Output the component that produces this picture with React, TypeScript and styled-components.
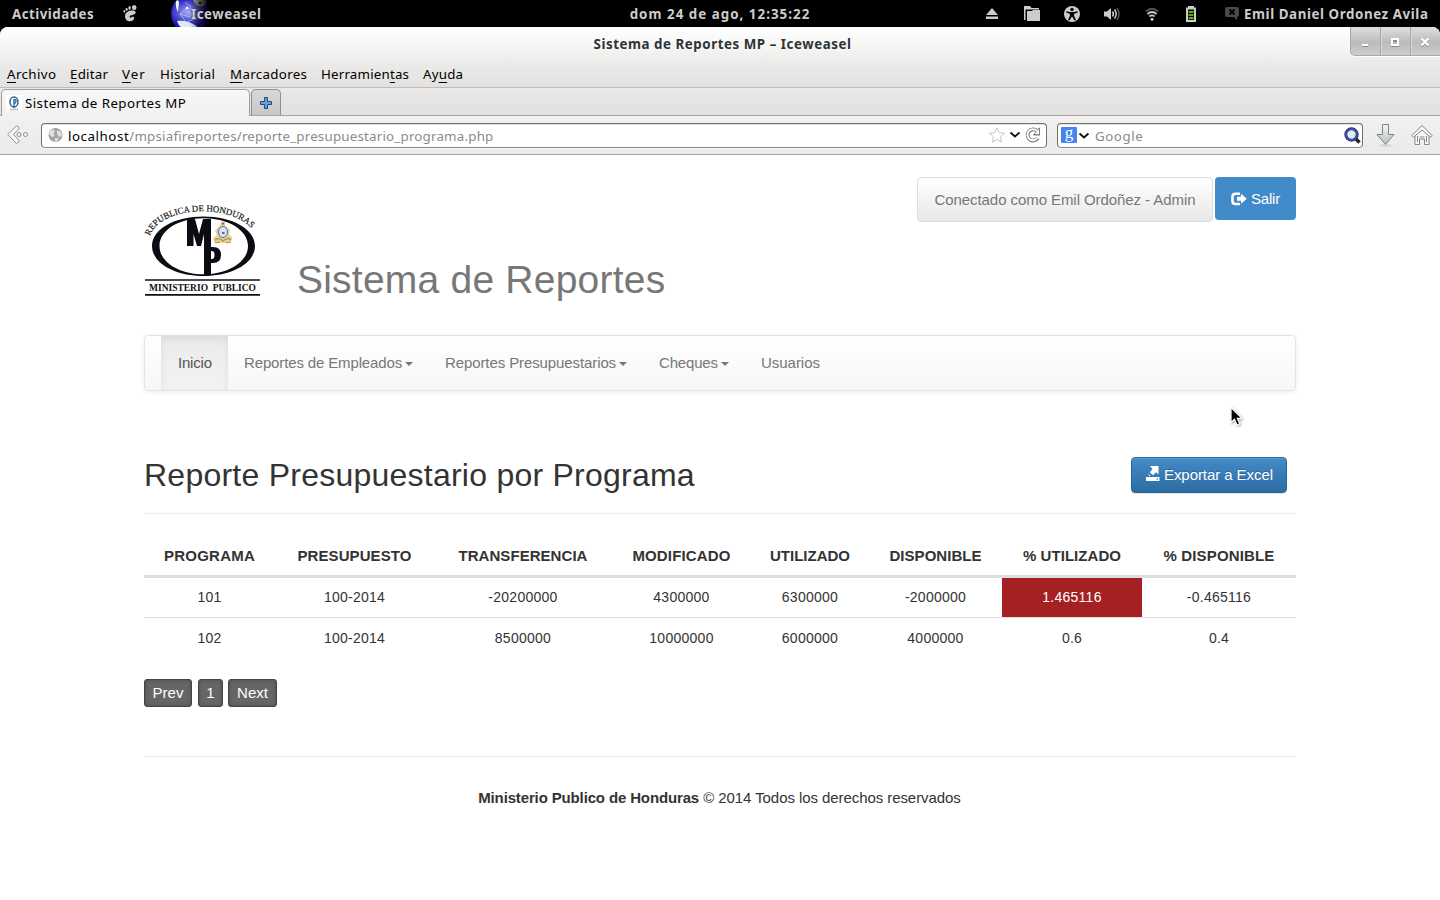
import React from 'react';
import styled, { createGlobalStyle, css } from 'styled-components';

const Global = createGlobalStyle`
  * { box-sizing: border-box; }
  body { margin: 0; background: #fff; overflow: hidden; }
  svg { display: block; flex: none; }
`;

const ui = `"Noto Sans", sans-serif`;
const helv = `"Liberation Sans", Arial, sans-serif`;

const Screen = styled.div`
  width: 1440px;
  height: 900px;
  overflow: hidden;
  background: #000;
  font-family: ${helv};
`;

/* ---------- desktop panel ---------- */
const Panel = styled.header`
  display: grid;
  grid-template-columns: 480px 480px 480px;
  height: 27px;
  background: #000;
  color: #ccc;
  font: 700 13.33px/28px ${ui};
  white-space: nowrap;
  overflow: hidden;
`;
const PanelLeft = styled.div`
  display: flex;
  padding-left: 12px;
`;
const Activities = styled.span`
  width: 111px;
  letter-spacing: 0.47px;
`;
const Foot = styled.span`
  width: 48px;
  padding-top: 5px;
`;
const AppMenu = styled.div`
  display: grid;
  grid-template-columns: 20px auto;
  height: 27px;
  overflow: hidden;
  & > svg { grid-area: 1 / 1; }
`;
const AppName = styled.span`
  z-index: 1;
  grid-area: 1 / 2;
  letter-spacing: 0.53px;
  text-shadow: 0 0 2px rgba(0, 0, 0, 0.7);
`;
const Clock = styled.div`
  text-align: center;
  letter-spacing: 1.03px;
`;
const Tray = styled.div`
  display: flex;
  align-items: center;
  height: 27px;
  padding-left: 12px;
`;
const TrayCell = styled.span<{ $w?: number }>`
  display: flex;
  flex: none;
  justify-content: center;
  width: ${(p) => p.$w ?? 40}px;
`;
const UserName = styled.span`
  padding-top: 1px;
  margin-left: -9px;
  letter-spacing: 0.58px;
`;

/* ---------- browser window ---------- */
const BrowserWindow = styled.div`
  height: 873px;
  background: #fff;
  border-radius: 8px 8px 0 0;
  overflow: hidden;
`;
const Chrome = styled.div`
  height: 61px;
  background: linear-gradient(#fff 0, #f6f6f5 19px, #ecebea 36px, #e2e1df 60px);
  border-bottom: 1px solid #bdbcba;
`;
const TitleBar = styled.div`
  display: grid;
  grid-template-columns: 90px 1fr 90px;
  height: 33px;
  padding-left: 5px;
`;
const WindowTitle = styled.div`
  grid-column: 2;
  text-align: center;
  color: #2e3436;
  font: 700 13.33px/35px ${ui};
  letter-spacing: 0.54px;
`;
const WindowButtons = styled.div`
  display: flex;
  height: 29px;
  border: 1px solid #aaa9a7;
  border-width: 0 0 1px 1px;
  border-radius: 0 0 0 5px;
  box-shadow: 0 1px #fff;
  background: linear-gradient(#dededd, #bcbbb9 55%, #cfcecd);
`;
const WindowButton = styled.span`
  display: flex;
  flex: none;
  align-items: center;
  justify-content: center;
  width: 30px;
  padding: 1px 1px 0 0;
  &:first-child { width: 29px; }
  & + & { border-left: 1px solid #a5a4a2; box-shadow: inset 1px 0 #dcdbda; }
`;
const MenuBar = styled.nav`
  display: flex;
  padding-left: 7px;
  color: #000;
  font: 13.33px/28px ${ui};
`;
const MenuItem = styled.span<{ $w: number; $ls: number }>`
  width: ${(p) => p.$w}px;
  letter-spacing: ${(p) => p.$ls}px;
  white-space: nowrap;
  u { text-underline-offset: 3px; text-decoration-thickness: 1px; }
`;
const TabStrip = styled.div`
  display: flex;
  height: 28px;
  padding: 1px 0 0 1px;
  background: linear-gradient(#eae9e8, #e1e0de);
  box-shadow: inset 0 -1px #a6a5a3;
`;
const Tab = styled.div`
  display: flex;
  width: 249px;
  padding: 0 0 0 4px;
  border: 1px solid #a09f9d;
  border-bottom: 0;
  border-radius: 5px 5px 0 0;
  background: linear-gradient(#f7f7f7, #f2f1f0);
  color: #000;
  font: 13.33px/27px ${ui};
  letter-spacing: 0.42px;
`;
const Favicon = styled.span`
  width: 16px;
  height: 16px;
  margin: 5px 3px 0 0;
  background: #fff;
`;
const NewTab = styled.div`
  display: flex;
  align-items: center;
  justify-content: center;
  width: 30px;
  margin-left: 1px;
  border: 1px solid #8f8e8c;
  border-radius: 5px 5px 0 0;
  border-bottom-color: #a6a5a3;
  background: linear-gradient(#d9d8d7, #c8c7c5);
`;
const Toolbar = styled.div`
  display: flex;
  height: 39px;
  padding: 7px 7px 0;
  background: linear-gradient(#f2f1f0, #ebeae8);
  border-bottom: 1px solid #a6a5a3;
`;
const BackIcon = styled.span`
  width: 34px;
  padding-top: 2px;
`;
const Field = styled.div<{ $w: number }>`
  display: flex;
  align-items: center;
  width: ${(p) => p.$w}px;
  height: 25px;
  margin-right: 10px;
  border: 1px solid #70706e;
  border-bottom-color: #8b8a88;
  border-radius: 4px;
  background: #fff;
  box-shadow: inset 0 1px #e3e3e2, 0 1px #f8f8f8;
  font: 13.33px/24px ${ui};
  color: #8b8b8b;
`;
const Address = styled.span`
  flex: 1;
  padding-top: 1px;
  margin-left: 5px;
  white-space: nowrap;
  letter-spacing: 0.205px;
  b { font-weight: 400; color: #000; letter-spacing: 0.55px; }
`;
const AddressTools = styled.span`
  display: flex;
  align-items: center;
  gap: 4px;
  margin: -1px 5px 0 0;
`;
const Engine = styled.span`
  display: flex;
  justify-content: center;
  width: 16px;
  height: 16px;
  margin: -1px 1px 0 3px;
  border-radius: 1px;
  background: #4484f3;
  color: #fff;
  font: 17px/12px "Liberation Serif", serif;
`;
const Placeholder = styled.span`
  flex: 1;
  padding-top: 1px;
  margin-left: 5px;
  letter-spacing: 0.55px;
`;
const ToolIcon = styled.span<{ $ml: number }>`
  margin-left: ${(p) => p.$ml}px;
`;

/* ---------- page ---------- */
const Page = styled.main`
  width: 1152px;
  margin: 0 auto;
  padding-top: 22px;
  color: #333;
  font-size: 15px;
`;
const Header = styled.div`
  display: flex;
  height: 158px;
`;
const LogoBox = styled.div`
  width: 153px;
  padding-top: 25px;
`;
const SiteTitle = styled.h1`
  flex: 1;
  margin: 80px 0 0;
  color: #777;
  font-weight: 400;
  font-size: 39px;
  line-height: 45px;
  letter-spacing: 0.22px;
`;
const Account = styled.div`
  display: flex;
  align-items: flex-start;
  gap: 2px;
`;
const UserBadge = styled.div`
  width: 296px;
  height: 45px;
  border: 1px solid #ddd;
  border-radius: 4px;
  background: linear-gradient(#fff, #e8e8e8);
  color: #777;
  line-height: 44px;
  text-align: center;
  letter-spacing: -0.07px;
`;
const Logout = styled.a`
  display: flex;
  align-items: center;
  gap: 4px;
  width: 81px;
  height: 43px;
  padding-left: 16px;
  border-radius: 4px;
  background: #428bca;
  color: #fff;
  letter-spacing: -0.2px;
`;
const NavBar = styled.nav`
  display: flex;
  height: 56px;
  padding-left: 16px;
  border: 1px solid #e4e4e4;
  border-radius: 4px;
  background: linear-gradient(#fff, #f6f6f6);
  box-shadow: 0 1px 5px rgba(0, 0, 0, 0.075), inset 0 1px 0 #fff;
`;
const NavItem = styled.a<{ $w: number; $ls: number; $active?: boolean }>`
  display: flex;
  align-items: center;
  width: ${(p) => p.$w}px;
  padding: 0 0 2px 16px;
  color: #777;
  white-space: nowrap;
  letter-spacing: ${(p) => p.$ls}px;
  ${(p) =>
    p.$active &&
    css`
      padding-left: 17px;
      color: #555;
      background: linear-gradient(#ebebeb, #f3f3f3);
      box-shadow: inset 0 3px 9px rgba(0, 0, 0, 0.075);
    `}
`;
const Caret = styled.i`
  margin: 3px 0 0 3px;
  border: 4px solid transparent;
  border-top-color: #777;
  border-bottom: 0;
`;
const ReportHead = styled.div`
  display: flex;
  justify-content: space-between;
  height: 57px;
  margin-top: 66px;
  padding-right: 9px;
  border-bottom: 1px solid #eee;
`;
const ReportTitle = styled.h2`
  margin: 0;
  font-weight: 400;
  font-size: 32px;
  line-height: 36px;
  letter-spacing: 0.24px;
`;
const ExportButton = styled.a`
  display: flex;
  align-items: center;
  gap: 4px;
  width: 156px;
  height: 36px;
  padding: 0 0 2px 14px;
  border: 1px solid #2b669a;
  border-radius: 4px;
  background: linear-gradient(#428bca, #2d6ca2);
  box-shadow: inset 0 1px 0 rgba(255, 255, 255, 0.15), 0 1px 1px rgba(0, 0, 0, 0.1);
  color: #fff;
  text-shadow: 0 -1px 0 rgba(0, 0, 0, 0.2);
  letter-spacing: -0.07px;
`;
const Table = styled.table`
  width: 1152px;
  margin-top: 21px;
  border-collapse: separate;
  border-spacing: 0;
  table-layout: fixed;
  text-align: center;
`;
const Th = styled.th<{ $w: number; $ls: number }>`
  width: ${(p) => p.$w}px;
  height: 43px;
  padding: 1px 0 0;
  border-bottom: 3px solid #ddd;
  font-size: 15px;
  line-height: 20px;
  letter-spacing: ${(p) => p.$ls}px;
`;
const Td = styled.td<{ $alert?: boolean; $first?: boolean }>`
  height: ${(p) => (p.$first ? 40 : 41)}px;
  padding: 0 0 ${(p) => (p.$first ? 2 : 1)}px;
  border-bottom: 1px solid ${(p) => (p.$first ? '#ddd' : 'transparent')};
  background: ${(p) => (p.$alert ? '#a52022' : 'none')};
  background-clip: padding-box;
  color: ${(p) => (p.$alert ? '#fff' : '#333')};
  font-size: 14px;
  line-height: 20px;
  letter-spacing: 0.26px;
`;
const Pager = styled.div`
  display: flex;
  margin-top: 20px;
`;
const PageButton = styled.a<{ $w: number; $gap: number }>`
  width: ${(p) => p.$w}px;
  height: 28px;
  margin-right: ${(p) => p.$gap}px;
  border: 1px solid #444;
  border-radius: 3px;
  background: #666;
  box-shadow: inset 0 0 4px #4c4c4c;
  color: #fff;
  line-height: 26px;
  text-align: center;
`;
const Footer = styled.footer`
  margin-top: 49px;
  border-top: 1px solid #eee;
  padding: 30px 1px 0 0;
  line-height: 21px;
  text-align: center;
  letter-spacing: -0.07px;
  b { letter-spacing: -0.14px; }
`;
const Pointer = styled.div`
  position: absolute;
  left: 1229px;
  top: 406px;
`;

const menus: [string, string, string, number, number][] = [
  ['', 'A', 'rchivo', 63, 0.38],
  ['', 'E', 'ditar', 52, 0.23],
  ['', 'V', 'er', 38, 1],
  ['Hi', 's', 'torial', 70, 0.3],
  ['', 'M', 'arcadores', 91, 0.32],
  ['Herramien', 't', 'as', 102, 0.18],
  ['Ay', 'u', 'da', 50, 0.2],
];
const navItems: [string, number, number, boolean][] = [
  ['Reportes de Empleados', 201, -0.14, true],
  ['Reportes Presupuestarios', 214, -0.1, true],
  ['Cheques', 102, -0.17, true],
  ['Usuarios', 92, -0.03, false],
];
const columns: [string, number, number][] = [
  ['PROGRAMA', 131, 0.25],
  ['PRESUPUESTO', 159, 0.09],
  ['TRANSFERENCIA', 178, 0.05],
  ['MODIFICADO', 139, 0.15],
  ['UTILIZADO', 118, 0],
  ['DISPONIBLE', 133, 0.03],
  ['% UTILIZADO', 140, 0.05],
  ['% DISPONIBLE', 154, 0.16],
];
const rows = [
  ['101', '100-2014', '-20200000', '4300000', '6300000', '-2000000', '1.465116', '-0.465116'],
  ['102', '100-2014', '8500000', '10000000', '6000000', '4000000', '0.6', '0.4'],
];

const GnomeFoot = () => (
  <svg width="15" height="17" viewBox="0 0 15 17" fill="#ccc">
    <ellipse cx="11.2" cy="2.6" rx="2.3" ry="2.5" />
    <ellipse cx="6.6" cy="2.9" rx="1.2" ry="1.9" />
    <ellipse cx="3.6" cy="4.3" rx="1" ry="1.6" />
    <ellipse cx="1.3" cy="6.2" rx=".9" ry="1.3" />
    <path d="M9.600 5.600C5.500 5.600 2 7.600 2 11c0 3.200 2 5.300 4.800 5.300 2.500 0 4.500-1.400 4.300-3.500-.1-1.300-1.500-1.500-2.200-.7-.8.9-2.400.7-2.300-.6C6.700 9.900 12.700 10.500 12.700 7.600c0-1.400-1.500-2-3.100-2z" />
  </svg>
);
const IceGlobe = () => (
  <svg width="38" height="27" viewBox="0 0 38 27">
    <defs>
      <radialGradient id="ice" cx=".45" cy=".45" r=".55">
        <stop offset="0" stopColor="#a3aef5" />
        <stop offset=".55" stopColor="#5454cf" />
        <stop offset="1" stopColor="#1c12b4" />
      </radialGradient>
      <linearGradient id="iceFade" x1="0" x2="1">
        <stop offset=".5" stopColor="#000" stopOpacity="0" />
        <stop offset="1" stopColor="#000" />
      </linearGradient>
    </defs>
    <path d="M6 0C1 4-1 12 1 20q1.500 4 4 7h29q4-6 4-13Q38 5 33 0z" fill="url(#ice)" />
    <path d="M5 1q3-2 3 2l-1 9q-3-5-2-11z" fill="#f4f6ff" />
    <path d="M6 21q10-1 20 5l-1 1H10q-3-2-4-6z" fill="#dcecf8" />
    <path d="m9 14 7-6 7 2-4 7zM14 2l6 5M9 14l6 8 9-3" fill="none" stroke="#bcc8ff" strokeWidth=".7" />
    <circle cx="16" cy="8" r="1.200" fill="#fff" />
    <path d="M22 0h14q0 5-5 6.500Q24 6 22 0z" fill="#aaa" />
    <circle cx="29" cy="3" r="1.500" fill="#222" />
    <path d="M0 0h38v27H0z" fill="url(#iceFade)" />
  </svg>
);
const Chevron = () => (
  <svg width="12" height="8" viewBox="0 0 12 8" fill="none" stroke="#111" strokeWidth="1.800">
    <path d="m1.500 1.500 4.500 4 4.500-4" />
  </svg>
);

const Logo = () => (
  <svg width="118" height="100" viewBox="0 0 118 100" overflow="visible">
    <path fillRule="evenodd" d="M59.500 14.500c29 0 51.500 12.500 51.500 29.500S88.500 74 59.500 74 8 61 8 44s22.500-29.500 51.500-29.500zm0 1.800C35 16.300 15.500 28 15.500 44S35 72.300 59.500 72.300 104 60 104 44 84 16.300 59.500 16.300z" fill="#0b0b12" />
    <path d="M43 17h8l4 15 4-15h8v56h-7V32l-3 12h-4l-3.500-12v12H43z" fill="#0b0b12" />
    <path fillRule="evenodd" d="M66 45h3q8 0 8 8t-8 8h-3zm1 4v8h1q2.500 0 2.500-4T68 49z" fill="#0b0b12" />
    <path d="m79 20 2.500 4 4.500 4-1 5 3 2-1 5q-8 2-17 0l-1-4 4-3-2-4 4-5z" fill="#e6d090" />
    <ellipse cx="79" cy="30" rx="4.500" ry="5.500" fill="#d5e2f8" stroke="#5376b9" />
    <path d="M77.500 20.500h3v2h-3zM78 30h2.500v2H78z" fill="#c04a45" />
    <path d="M71 38q4-3 8 1 5-4 8-1M71 41l5-1m6 1 5-1" fill="none" stroke="#a39d4c" strokeWidth="1.200" />
    <path id="arc" d="M6 34C17 1 99 1 112 34" fill="none" />
    <text fontFamily="Liberation Serif" fontSize="8.900" fill="#222" stroke="#222" strokeWidth=".2">
      <textPath href="#arc" startOffset="0">REPUBLICA DE HONDURAS</textPath>
    </text>
    <path d="M1 78h115M1 92.800h115" stroke="#111" strokeWidth="1.700" />
    <text x="5" y="89" textLength="107" lengthAdjust="spacingAndGlyphs" fontFamily="Liberation Serif" fontWeight="700" fontSize="10" fill="#111">MINISTERIO&#160; PUBLICO</text>
  </svg>
);

export default function App() {
  return (
    <Screen>
      <Global />
      <Panel>
        <PanelLeft>
          <Activities>Actividades</Activities>
          <Foot><GnomeFoot /></Foot>
          <AppMenu><IceGlobe /><AppName>Iceweasel</AppName></AppMenu>
        </PanelLeft>
        <Clock>dom 24 de ago, 12:35:22</Clock>
        <Tray>
          <TrayCell>
            <svg width="12" height="12" viewBox="0 0 12 12" fill="#ccc"><path d="M6 0l6 7H0zM0 8.500h12V11H0z" /></svg>
          </TrayCell>
          <TrayCell>
            <svg width="16" height="15" viewBox="0 0 16 15" fill="#ccc"><path d="M0 0h6l1.500 2H15v1.500H1.500V14H0zM3 5h5l1-1h7v11H3z" /></svg>
          </TrayCell>
          <TrayCell>
            <svg width="16" height="16" viewBox="0 0 16 16"><circle cx="8" cy="8" r="8" fill="#ccc" /><circle cx="8" cy="3.400" r="1.700" /><path d="m2.500 5.300 4 .7h3l4-.7.3 1.300-3.800 1.400.2 2L12 14l-1.400.6L8 10.500l-2.600 4.100L4 14l1.800-4L6 8 2.200 6.600z" /></svg>
          </TrayCell>
          <TrayCell>
            <svg width="16" height="14" viewBox="0 0 16 14" fill="none" stroke="#ccc" strokeWidth="1.500"><path d="M0 4.500h3L7 1v12L3 9.500H0z" fill="#ccc" stroke="none" /><path d="M8.500 4.500q1.800 2.500 0 5M10.500 2.500q3.500 4.500 0 9" /><path d="M12.800 1q4.500 6 0 12" stroke="#555" /></svg>
          </TrayCell>
          <TrayCell $w={39}>
            <svg width="14" height="14" viewBox="0 0 14 14" fill="none" stroke="#ccc" strokeWidth="1.700"><path d="M.8 4.500q6.200-5.500 12.400 0" stroke="#555" /><path d="M2.500 7q4.500-4 9 0M4.500 9.500q2.500-2.200 5 0" /><circle cx="7" cy="12.200" r="1.500" fill="#ccc" stroke="none" /></svg>
          </TrayCell>
          <TrayCell>
            <svg width="12" height="16" viewBox="0 0 12 16"><path fillRule="evenodd" d="M3 0h6v1.500h2V16H1V1.500h2zM3 3.500V14h6V3.500z" fill="#ccc" /><path d="M3.500 5h5v2h-5zM3.500 8h5v2h-5zM3.500 11h5v2.200h-5z" fill="#5faa12" /></svg>
          </TrayCell>
          <TrayCell $w={42}>
            <svg width="14" height="14" viewBox="0 0 14 14"><path d="M2 0h10q2 0 2 2v6q0 2-2 2v3.500L9 10H2Q0 10 0 8V2q0-2 2-2z" fill="#4b4b4b" /><path d="m4.500 2.500 5 5m0-5-5 5" stroke="#000" strokeWidth="2" /></svg>
          </TrayCell>
          <UserName>Emil Daniel Ordonez Avila</UserName>
        </Tray>
      </Panel>

      <BrowserWindow>
        <Chrome>
          <TitleBar>
            <WindowTitle>Sistema de Reportes MP – Iceweasel</WindowTitle>
            <WindowButtons>
              <WindowButton><svg width="8" height="10" viewBox="0 0 8 10"><path d="M1 7h6v2H1z" fill="#fff" /><path d="M1 9h6v1H1z" fill="#8b8b8b" /></svg></WindowButton>
              <WindowButton><svg width="10" height="10" viewBox="0 0 10 10" fill="none"><path d="M2 3h6v5H2z" stroke="#8b8b8b" strokeWidth="2" transform="translate(0 1)" /><path d="M2 2h6v6H2z" stroke="#fff" strokeWidth="2" /></svg></WindowButton>
              <WindowButton><svg width="10" height="10" viewBox="0 0 10 10" strokeWidth="2.400"><path d="m1.500 2.500 7 7m0-7-7 7" stroke="#8b8b8b" /><path d="m1.500 1.500 7 7m0-7-7 7" stroke="#fff" /></svg></WindowButton>
            </WindowButtons>
          </TitleBar>
          <MenuBar>
            {menus.map(([a, u, b, w, ls]) => (
              <MenuItem key={a + u + b} $w={w} $ls={ls}>{a}<u>{u}</u>{b}</MenuItem>
            ))}
          </MenuBar>
        </Chrome>
        <TabStrip>
          <Tab>
            <Favicon>
              <svg width="16" height="16" viewBox="0 0 16 16" fill="none" stroke="#2a6496"><ellipse cx="8" cy="7" rx="4" ry="5" strokeWidth="1.500" /><path d="M8 4v9M8 4.500q2.500 0 2 2T8 8.500" strokeWidth="1.300" /><path d="M4 14.500h8" stroke="#bbb" strokeWidth="1.500" /></svg>
            </Favicon>
            Sistema de Reportes MP
          </Tab>
          <NewTab>
            <svg width="12" height="12" viewBox="0 0 12 12"><path d="M4.500.5h3v4h4v3h-4v4h-3v-4h-4v-3h4z" fill="#6d9bd3" stroke="#204a87" /></svg>
          </NewTab>
        </TabStrip>
        <Toolbar>
          <BackIcon>
            <svg width="22" height="20" viewBox="0 0 22 20" fill="#f8f8f7" stroke="#8d8c8a"><path d="M9.500.8 12.500 3 6.500 9.500l6 6.500-3 2.500L.8 9.500z" /><circle cx="12" cy="9.500" r="2" /><circle cx="18.500" cy="9.500" r="2" /></svg>
          </BackIcon>
          <Field $w={1006}>
            <ToolIcon $ml={6}>
              <svg width="15" height="15" viewBox="0 0 15 15"><circle cx="7.500" cy="7" r="7" fill="#a3a3a3" /><path d="M2 3q4-3 5 0L5.500 5.500 7 8 4 9 1 6zM9 2l4 2 1 4-3 1-2-3zM7 10l4 0-2 3.500H7z" fill="#e0e0e0" /></svg>
            </ToolIcon>
            <Address><b>localhost</b>/mpsiafireportes/reporte_presupuestario_programa.php</Address>
            <AddressTools>
              <svg width="16" height="16" viewBox="0 0 16 16" fill="#fff" stroke="#c4c4c4"><path d="m8 .8 2.200 4.900 5.200.6-3.900 3.500 1.100 5.200L8 12.400 3.400 15l1.100-5.200L.6 6.300l5.200-.6z" /></svg>
              <Chevron />
              <svg width="16" height="16" viewBox="0 0 16 16" fill="none"><path d="M12.800 11.200A5.600 5.600 0 1 1 12 3.800" stroke="#7c7c7a" strokeWidth="3.800" /><path d="M14.500.8v7H8.300l2.300-2.300L12.500 3z" fill="#fff" stroke="#7c7c7a" /><path d="M12.400 11A5.500 5.500 0 1 1 12 4" stroke="#fff" strokeWidth="1.900" /><path d="M9 7.800h6" stroke="#7c7c7a" /></svg>
            </AddressTools>
          </Field>
          <Field $w={306}>
            <Engine>g</Engine>
            <Chevron />
            <Placeholder>Google</Placeholder>
            <svg width="18" height="18" viewBox="0 0 18 18" fill="none"><path d="m11 11 4.500 4.500" stroke="#2b2222" strokeWidth="3.600" /><circle cx="7.500" cy="7.500" r="5.700" fill="#e6edf8" stroke="#20307c" strokeWidth="3" /><circle cx="7.500" cy="7.500" r="5.500" stroke="#5b76c0" /></svg>
          </Field>
          <ToolIcon $ml={3}>
            <svg width="20" height="24" viewBox="0 0 20 24"><defs><linearGradient id="dl" x2="0" y2="1"><stop stopColor="#f5f5f5" /><stop offset="1" stopColor="#b4bfc6" /></linearGradient></defs><ellipse cx="10" cy="22.500" rx="7" ry="1.500" fill="#d8d7d5" /><path d="M6.500 1.500h6v10h5.500L9.500 21.500 1 11.500h5.500z" fill="url(#dl)" stroke="#7f8583" /></svg>
          </ToolIcon>
          <ToolIcon $ml={15}>
            <svg width="22" height="23" viewBox="0 0 22 23" fill="#f8f8f8" stroke="#858583"><path d="M4 12v9.500h4.500V16h5v5.500H18V12l-7-6z" /><path d="M11 2.500 .8 12.500l1.700 1.700L11 7l8.500 7.200 1.700-1.700z" /><path d="M6.500 13v6m9-6v6M8.500 14h5" /></svg>
          </ToolIcon>
        </Toolbar>

        <Page>
          <Header>
            <LogoBox><Logo /></LogoBox>
            <SiteTitle>Sistema de Reportes</SiteTitle>
            <Account>
              <UserBadge>Conectado como Emil Ordoñez - Admin</UserBadge>
              <Logout>
                <svg width="16" height="14" viewBox="0 0 16 14" fill="none"><path d="M9 1.800H4.500Q1.500 1.800 1.500 4.500v4.800q0 2.700 3 2.700H9" stroke="#fff" strokeWidth="2.600" /><path d="M6 4.800h4V1.800L15.800 6.800 10 11.800V8.800H6z" fill="#fff" /></svg>
                Salir
              </Logout>
            </Account>
          </Header>
          <NavBar>
            <NavItem $w={67} $ls={-0.2} $active>Inicio</NavItem>
            {navItems.map(([label, w, ls, caret]) => (
              <NavItem key={label} $w={w} $ls={ls}>{label}{caret && <Caret />}</NavItem>
            ))}
          </NavBar>
          <ReportHead>
            <ReportTitle>Reporte Presupuestario por Programa</ReportTitle>
            <ExportButton>
              <svg width="14" height="16" viewBox="0 0 14 16" fill="#fff"><path d="M4 0h8.500v8.500L10 6.200 7 9.200 3.800 6.200 6.500 3zM2 7.500l2.500 2-1 .7zM0 11h13.500v4H0z" /><path d="M10.500 12.500H12v1h-1.500z" fill="#2d6ca2" /></svg>
              Exportar a Excel
            </ExportButton>
          </ReportHead>
          <Table>
            <thead>
              <tr>{columns.map(([c, w, ls]) => <Th key={c} $w={w} $ls={ls}>{c}</Th>)}</tr>
            </thead>
            <tbody>
              {rows.map((r, i) => (
                <tr key={r[0]}>
                  {r.map((v, j) => <Td key={j} $first={i === 0} $alert={i === 0 && j === 6}>{v}</Td>)}
                </tr>
              ))}
            </tbody>
          </Table>
          <Pager>
            <PageButton $w={48} $gap={6}>Prev</PageButton>
            <PageButton $w={25} $gap={5}>1</PageButton>
            <PageButton $w={49} $gap={0}>Next</PageButton>
          </Pager>
          <Footer><b>Ministerio Publico de Honduras</b> © 2014 Todos los derechos reservados</Footer>
        </Page>
      </BrowserWindow>
      <Pointer>
        <svg width="16" height="22" viewBox="0 0 16 22"><path d="M2 1.500v15l3.500-3.300 2.500 5.800 2.800-1.200-2.500-5.500H13z" fill="#000" stroke="#fff" strokeWidth="1.200" filter="drop-shadow(1px 1px 1px #0005)" /></svg>
      </Pointer>
    </Screen>
  );
}
